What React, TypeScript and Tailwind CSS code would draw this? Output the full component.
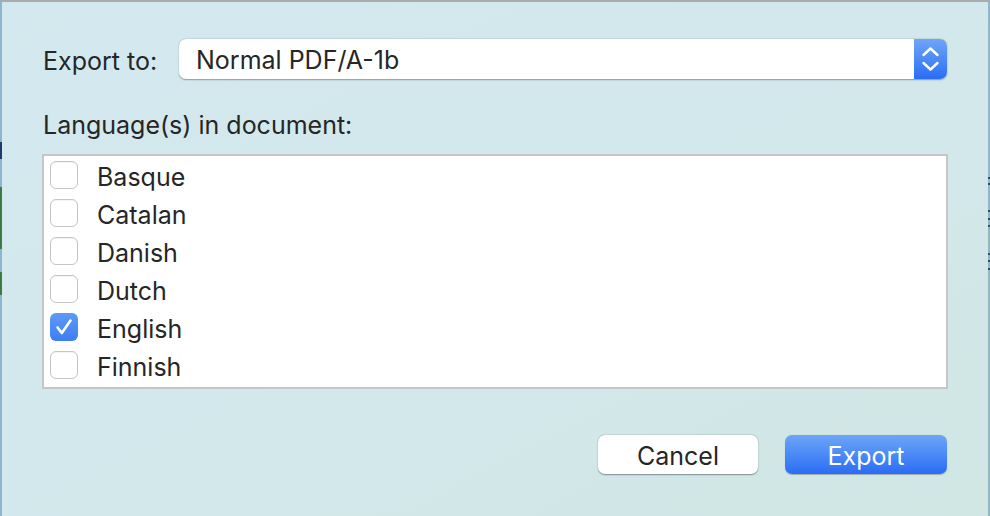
import React from "react";

const langs = [
  { name: "Basque", checked: false },
  { name: "Catalan", checked: false },
  { name: "Danish", checked: false },
  { name: "Dutch", checked: false },
  { name: "English", checked: true },
  { name: "Finnish", checked: false },
];

function Checkbox({ checked }: { checked: boolean }) {
  if (checked) {
    return (
      <div className="w-[28px] h-[28px] shrink-0 rounded-[6px] bg-gradient-to-b from-[#5e9af6] to-[#3b7ef3] flex items-center justify-center">
        <svg width="28" height="28" viewBox="0 0 28 28">
          <path d="M7.5 14.5 L11.8 20 L20.5 7.5" fill="none" stroke="white" strokeWidth="2.6" strokeLinecap="round" strokeLinejoin="round" />
        </svg>
      </div>
    );
  }
  return (
    <div className="w-[28px] h-[28px] shrink-0 rounded-[6px] bg-white border border-[#c4c4c4] shadow-[inset_0_1px_0_rgba(0,0,0,0.04)]" />
  );
}

export default function App() {
  return (
    <div
      className="w-[990px] h-[516px] flex overflow-hidden text-[#262626] border-t-2 border-[#a9abad] bg-gradient-to-br from-[#d4e9ef] via-[#d2e8ec] to-[#d1e7e4]"
      style={{ fontFamily: "Inter, 'Liberation Sans', sans-serif" }}
    >
      <div className="w-[2px] shrink-0 bg-[linear-gradient(to_bottom,#8db5cf_0px,#8db5cf_140px,#1f3a6e_140px,#1f3a6e_157px,#8db5cf_157px,#8db5cf_185px,#3d7a45_185px,#3d7a45_247px,#8db5cf_247px,#8db5cf_270px,#3d7a45_270px,#3d7a45_293px,#8db5cf_293px,#8db5cf_100%)]" />
      <div className="flex-1 flex flex-col pl-[40px] pr-[41px] pt-[37px]">
        <div className="flex items-center h-[40px] pl-[1px]">
          <div className="w-[136px] text-[25px] leading-none pt-[4px]">Export to:</div>
          <div className="flex-1 h-[40px] flex rounded-[7px] bg-white shadow-[0_0.5px_1.5px_rgba(0,0,0,0.35)] overflow-hidden">
            <div className="flex-1 flex items-center pl-[17px] pt-[3px] text-[25px]">Normal PDF/A-1b</div>
            <div className="w-[33px] bg-gradient-to-b from-[#6fa5f7] to-[#2a6df5] flex items-center justify-center">
              <svg width="33" height="40" viewBox="0 0 33 40">
                <path d="M9.5 16 L16.5 9.5 L23.5 16" fill="none" stroke="white" strokeWidth="2.4" strokeLinecap="round" strokeLinejoin="round" />
                <path d="M9.5 24 L16.5 30.5 L23.5 24" fill="none" stroke="white" strokeWidth="2.4" strokeLinecap="round" strokeLinejoin="round" />
              </svg>
            </div>
          </div>
        </div>
        <div className="mt-[30px] pl-[1px] text-[25px] leading-[30px] pt-[1px]">Language(s) in document:</div>
        <div className="mt-[14px] mr-[-1px] h-[235px] border-2 border-[#c6c6c6] bg-white">
          {langs.map((l) => (
            <div key={l.name} className="h-[38px] flex items-center pl-[6px]">
              <Checkbox checked={l.checked} />
              <span className="ml-[19px] pt-[4px] text-[25px] leading-none">{l.name}</span>
            </div>
          ))}
        </div>
        <div className="mt-[46px] flex justify-end gap-[27px]">
          <button className="w-[160px] h-[39px] pt-[3px] rounded-[7px] bg-white shadow-[0_0.5px_1.5px_rgba(0,0,0,0.4)] text-[25px] leading-none text-[#262626]">
            Cancel
          </button>
          <button className="w-[162px] h-[39px] pt-[3px] rounded-[7px] bg-gradient-to-b from-[#6da5f7] to-[#2a6cf5] shadow-[0_0.5px_1px_rgba(0,0,0,0.25)] text-[25px] leading-none text-white">
            Export
          </button>
        </div>
      </div>
      <div className="w-[2px] shrink-0 bg-[linear-gradient(to_bottom,#8fb6c9_0px,#8fb6c9_175px,#2a4a7a_175px,#2a4a7a_177px,#8fb6c9_177px,#8fb6c9_181px,#2a4a7a_181px,#2a4a7a_183px,#8fb6c9_183px,#8fb6c9_208px,#2a4a7a_208px,#2a4a7a_210px,#8fb6c9_210px,#8fb6c9_216px,#2a4a7a_216px,#2a4a7a_218px,#8fb6c9_218px,#8fb6c9_223px,#2a4a7a_223px,#2a4a7a_225px,#8fb6c9_225px,#8fb6c9_251px,#2a4a7a_251px,#2a4a7a_253px,#8fb6c9_253px,#8fb6c9_258px,#2a4a7a_258px,#2a4a7a_260px,#8fb6c9_260px,#8fb6c9_266px,#2a4a7a_266px,#2a4a7a_268px,#8fb6c9_268px,#8fb6c9_100%)]" />
    </div>
  );
}
